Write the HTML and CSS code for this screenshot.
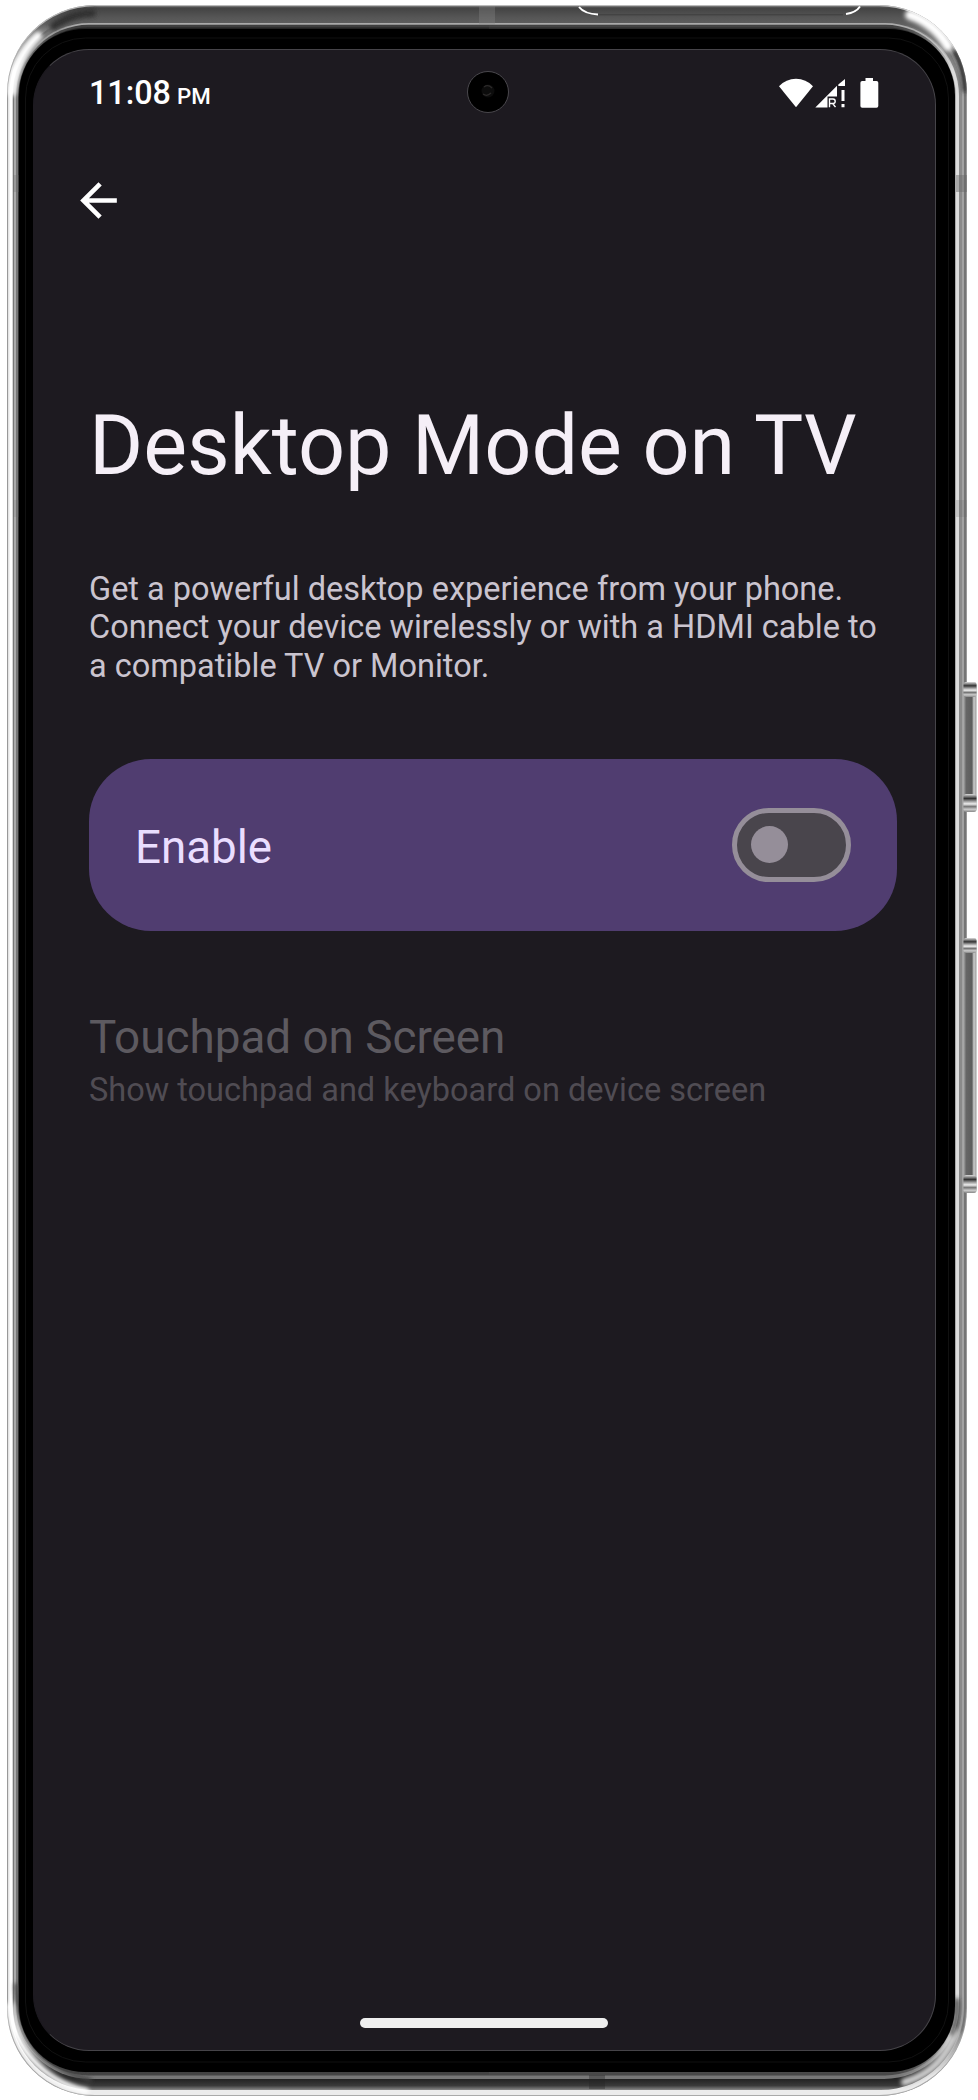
FILE: index.html
```html
<!DOCTYPE html>
<html lang="en">
<head>
<meta charset="utf-8">
<title>Desktop Mode on TV</title>
<link rel="stylesheet" href="styles.css">
</head>
<body>
<div class="device">
  <svg class="frame" viewBox="0 0 978 2100" aria-hidden="true">
    <defs>
      <linearGradient id="fadeTop" x1="0" y1="0" x2="0" y2="1">
        <stop offset="0" stop-color="#fff"/><stop offset=".35" stop-color="#fff"/><stop offset="1" stop-color="#000"/>
      </linearGradient>
      <linearGradient id="fadeBottom" x1="0" y1="1" x2="0" y2="0">
        <stop offset="0" stop-color="#fff"/><stop offset=".35" stop-color="#fff"/><stop offset="1" stop-color="#000"/>
      </linearGradient>
      <linearGradient id="topMetal" gradientUnits="userSpaceOnUse" x1="0" y1="5" x2="0" y2="29">
        <stop offset="0" stop-color="#666"/><stop offset=".15" stop-color="#444"/><stop offset=".5" stop-color="#555"/><stop offset="1" stop-color="#666"/>
      </linearGradient>
      <linearGradient id="bottomMetal" gradientUnits="userSpaceOnUse" x1="0" y1="2079" x2="0" y2="2090">
        <stop offset="0" stop-color="#222"/><stop offset=".6" stop-color="#3a3a3a"/><stop offset="1" stop-color="#888"/>
      </linearGradient>
      <linearGradient id="key" x1="0" y1="0" x2="1" y2="0">
        <stop offset="0" stop-color="#aaa"/><stop offset=".2" stop-color="#666"/><stop offset=".65" stop-color="#5c5c5c"/><stop offset=".8" stop-color="#ccc"/><stop offset="1" stop-color="#999"/>
      </linearGradient>
      <linearGradient id="keyEnd" x1="0" y1="0" x2="0" y2="1">
        <stop offset="0" stop-color="#ddd"/><stop offset=".25" stop-color="#333"/><stop offset=".4" stop-color="#999"/><stop offset=".55" stop-color="#eee"/><stop offset=".7" stop-color="#777"/><stop offset=".85" stop-color="#ccc"/><stop offset="1" stop-color="#888"/>
      </linearGradient>
      <mask id="maskTop" maskUnits="userSpaceOnUse" x="0" y="0" width="978" height="70"><rect width="978" height="70" fill="url(#fadeTop)"/></mask>
      <mask id="maskBottom" maskUnits="userSpaceOnUse" x="0" y="2030" width="978" height="70"><rect y="2030" width="978" height="70" fill="url(#fadeBottom)"/></mask>
      <clipPath id="leftHalf"><rect width="489" height="2100"/></clipPath>
      <clipPath id="rightHalf"><rect x="489" width="489" height="2100"/></clipPath>
      <clipPath id="body"><rect x="7" y="5" width="960" height="2091" rx="88"/></clipPath>
      <filter id="soft" filterUnits="userSpaceOnUse" x="0" y="0" width="978" height="2100"><feGaussianBlur stdDeviation="2"/></filter>
    </defs>

    <g clip-path="url(#leftHalf)">
      <rect x="7" y="5" width="960" height="2091" rx="88" fill="#999"/>
      <rect x="8" y="7" width="958" height="2087" rx="86" fill="#e4e4e4"/>
      <rect x="9.5" y="10" width="955" height="2081" rx="84" fill="#fff"/>
      <rect x="12.7" y="16" width="948.6" height="2069" rx="79" fill="#777"/>
      <rect x="14" y="19" width="946" height="2063" rx="76" fill="#aaa"/>
      <rect x="16" y="23" width="942" height="2055" rx="73" fill="#777"/>
      <rect x="18" y="27" width="938" height="2047" rx="70" fill="#333"/>
    </g>
    <g clip-path="url(#rightHalf)">
      <rect x="7" y="5" width="960" height="2091" rx="88" fill="#999"/>
      <rect x="8" y="7" width="958" height="2087" rx="86" fill="#757575"/>
      <rect x="10" y="11" width="954" height="2079" rx="83" fill="#a2a2a2"/>
      <rect x="12" y="15" width="950" height="2071" rx="80" fill="#8a8a8a"/>
      <rect x="15" y="21" width="944" height="2059" rx="75" fill="#dcdcdc"/>
      <rect x="18" y="27" width="938" height="2047" rx="70" fill="#aaa"/>
    </g>
    <g mask="url(#maskTop)">
      <rect x="7" y="5" width="960" height="2091" rx="88" fill="#bbb"/>
      <rect x="7.7" y="6.3" width="958.6" height="2088.4" rx="87" fill="url(#topMetal)"/>
      <rect x="16" y="23" width="942" height="2055" rx="73" fill="#aaa"/>
      <rect x="16.8" y="24.8" width="940.4" height="2051.4" rx="72" fill="#3c3c3c"/>
      <rect x="18" y="27.5" width="938" height="2046" rx="70" fill="#222"/>
    </g>
    <g mask="url(#maskBottom)">
      <rect x="7" y="5" width="960" height="2091" rx="88" fill="#aaa"/>
      <rect x="7.7" y="6" width="958.6" height="2089" rx="87" fill="#ececec"/>
      <rect x="10.5" y="11" width="953" height="2079" rx="83" fill="url(#bottomMetal)"/>
      <rect x="15" y="21" width="944" height="2058" rx="75" fill="#777"/>
      <rect x="17" y="25" width="940" height="2050.5" rx="72" fill="#444"/>
    </g>

    <!-- corner reflections -->
    <g clip-path="url(#body)">
      <g filter="url(#soft)" fill="none" stroke-linecap="round">
        <path d="M12 92C15 66 24 49 38 36" stroke="#fff" stroke-width="8"/>
        <path d="M54 26C66 18 76 14 92 13" stroke="#333" stroke-width="8"/>
        <path d="M910 15C926 20 940 32 948 46" stroke="#fff" stroke-width="10"/>
        <path d="M956 52C962 64 964 76 965 90" stroke="#333" stroke-width="5"/>
        <path d="M10 2006C14 2044 40 2080 86 2091" stroke="#fff" stroke-width="6"/>
        <path d="M16 1985C19 2030 44 2068 90 2080" stroke="#444" stroke-width="4"/>
        <path d="M905 2082C932 2074 945 2058 955 2034" stroke="#ccc" stroke-width="8"/>
        <path d="M957 2000C958 2014 956 2022 952 2034" stroke="#333" stroke-width="4"/>
      </g>
    </g>

    <!-- antenna bands -->
    <rect x="479" y="6" width="16" height="19" fill="#888" opacity=".35"/>
    <rect x="589" y="2075" width="16" height="14" fill="#222" opacity=".35"/>
    <rect x="956" y="175" width="11" height="17" fill="#666" opacity=".45"/>
    <rect x="956" y="500" width="11" height="17" fill="#666" opacity=".2"/>
    <rect x="13" y="175" width="6" height="17" fill="#666" opacity=".25"/>
    <rect x="13" y="500" width="6" height="17" fill="#666" opacity=".15"/>
    <!-- top key outline -->
    <path d="M579 7C583 12 588 14 598 14.5M860 6.500C857 11 853 13 846 14" fill="none" stroke="#fff" stroke-width="2"/>
    <path d="M598 14.800H843" stroke="#333" opacity=".6"/>

    <!-- side keys -->
    <rect x="963.500" y="682" width="13" height="130" rx="3" fill="url(#key)"/>
    <rect x="963.500" y="682" width="13" height="15" rx="3" fill="url(#keyEnd)"/>
    <rect x="963.500" y="794" width="13" height="18" rx="3" fill="url(#keyEnd)"/>
    <rect x="963.500" y="938" width="13" height="255" rx="3" fill="url(#key)"/>
    <rect x="963.500" y="938" width="13" height="15" rx="3" fill="url(#keyEnd)"/>
    <rect x="963.500" y="1175" width="13" height="18" rx="3" fill="url(#keyEnd)"/>

    <rect x="19" y="29" width="936" height="2043" rx="66" fill="#000"/>
    <rect x="25.500" y="38" width="923" height="2024" rx="60" fill="none" stroke="#111"/>
  </svg>

  <main class="screen">
    <header class="status">
      <div class="time">11:08<span class="meridiem">PM</span></div>
      <svg class="camera" viewBox="0 0 42 42" aria-hidden="true">
        <circle cx="21" cy="21" r="20.500" fill="#000" stroke="#4a484d"/>
        <circle cx="21" cy="20" r="6.500" fill="#0c0c0c"/>
        <path d="M16 23Q20 26 24 22M17 16Q21 13 25 17" fill="none" stroke="#2c2a2a" stroke-width="1.200"/>
      </svg>
      <svg class="indicators" viewBox="0 0 101 30" aria-hidden="true" fill="#fff">
        <path d="M0 8.200Q7 .7 17 .7T34 8.200L17 29.300Z"/>
        <path d="M36.300 29.500L58 7.800V18.500H48.500V29.500Z"/>
        <path d="M59.300 6.500L66 1V8H59.300Z"/>
        <path d="M62.500 12h3v11h-3zM62.500 26h3v3.300h-3z"/>
        <path d="M50.500 29.200V21h3.500q2.200 0 2.200 2.200t-2.200 2.300h-3.500M53.700 25.500l2.800 3.700" fill="none" stroke="#fff" stroke-width="1.400"/>
        <path d="M86.500 0h7.500v3h3.500q1.800 0 1.800 1.800V28q0 1.800-1.800 1.800H83.200q-1.800 0-1.800-1.800V4.800q0-1.800 1.800-1.800h3.300z"/>
      </svg>
    </header>
    <svg class="back" viewBox="0 0 24 24" role="img" aria-label="Back"><path fill="#fff" d="M20 11H7.830l5.590-5.590L12 4l-8 8 8 8 1.410-1.410L7.830 13H20v-2z"/></svg>
    <h1 class="title">Desktop Mode on TV</h1>
    <p class="intro">Get a powerful desktop experience from your phone.<br>Connect your device wirelessly or with a HDMI cable to<br>a compatible TV or Monitor.</p>
    <section class="card">
      <span class="card-label">Enable</span>
      <span class="switch" role="switch" aria-checked="false"><span class="thumb"></span></span>
    </section>
    <section class="option">
      <h2 class="option-title">Touchpad on Screen</h2>
      <p class="option-note">Show touchpad and keyboard on device screen</p>
    </section>
    <div class="home-bar"></div>
  </main>
</div>
</body>
</html>
```
FILE: styles.css
```css
* { box-sizing: border-box; margin: 0; }
body { background: #fff; font-family: Roboto, sans-serif; }
.device { display: grid; width: 978px; height: 2100px; overflow: hidden; }
.frame { grid-area: 1 / 1; display: block; width: 978px; height: 2100px; }
.screen {
  grid-area: 1 / 1;
  z-index: 1;
  display: flex;
  flex-direction: column;
  width: 903px;
  height: 2002px;
  margin: 49px 0 0 33px;
  padding: 0 38px 22px 55px;
  background: #1d1a20;
  border: 1px solid #464449;
  border-left-color: #1d1a20;
  border-radius: 56px;
  white-space: nowrap;
}
.status { display: grid; grid-template-columns: 378px 1fr 101px; align-items: center; height: 84px; margin-right: 17px; }
.time { padding-top: 4px; color: #fff; font-size: 32.3px; font-weight: 500; line-height: 38px; }
.meridiem { margin-left: 6px; font-size: 22.3px; }
.camera { width: 42px; height: 42px; }
.indicators { width: 101px; height: 30px; margin-top: 1px; }
.back { width: 55px; height: 55px; margin: 39px 0 0 -18px; }
.title { margin-top: 169px; color: #f5eff7; font-size: 82.7px; font-weight: 400; line-height: 98px; }
.intro { margin-top: 75px; color: #cac4cf; font-size: 32.5px; line-height: 38.3px; }
.card { display: flex; align-items: center; justify-content: space-between; height: 172px; margin-top: 74px; padding: 0 46px; background: #503d70; border-radius: 62px; }
.card-label { padding-top: 5px; color: #eadeff; font-size: 45.7px; }
.switch { display: flex; align-items: center; width: 119px; height: 74px; padding-left: 14px; background: #49454c; border: 5px solid #958e99; border-radius: 37px; }
.thumb { width: 37px; height: 37px; border-radius: 50%; background: #958e99; }
.option { margin-top: 80px; }
.option-title { color: #5d5a60; font-size: 45.8px; font-weight: 400; line-height: 54px; }
.option-note { margin-top: 6px; color: #504c53; font-size: 32.5px; line-height: 38px; }
.home-bar { align-self: center; width: 248px; height: 10px; margin: auto 19px 0 0; border-radius: 5px; background: #eee; }
```
